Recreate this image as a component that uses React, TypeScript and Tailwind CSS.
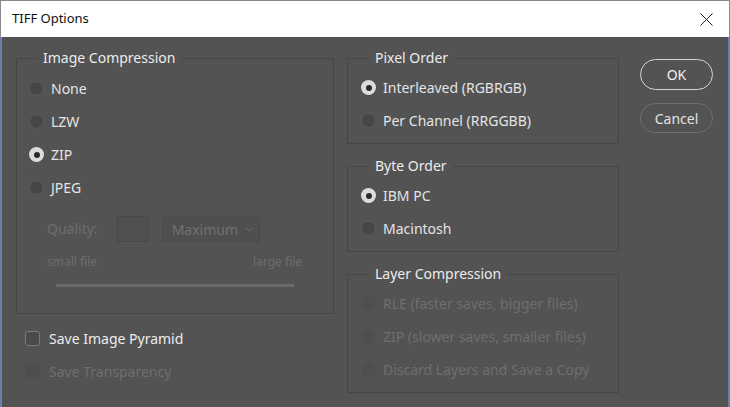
import { ReactNode } from "react";

type RadioProps = { label: string; checked?: boolean; disabled?: boolean };

const Radio = ({ label, checked, disabled }: RadioProps) => (
  <div className="flex h-[33px] items-center">
    {checked ? (
      <span className="flex h-[15px] w-[15px] items-center justify-center rounded-full bg-[#dcdcdc]">
        <span className="h-[6px] w-[6px] rounded-full bg-[#2a2a2a]" />
      </span>
    ) : (
      <span
        className={
          disabled
            ? "h-[15px] w-[15px] rounded-full bg-[#4f4f4f]"
            : "h-[15px] w-[15px] rounded-full border border-[#5c5c5c] bg-[#464646]"
        }
      />
    )}
    <span
      className={`ml-[7px] text-[14px] ${
        disabled ? "text-[#6e6e6e]" : "text-[#e4e4e4]"
      }`}
    >
      {label}
    </span>
  </div>
);

const Group = ({
  title,
  className,
  children,
}: {
  title: string;
  className: string;
  children: ReactNode;
}) => (
  <fieldset className={`border border-[#464646] ${className}`}>
    <legend className="ml-[8px] px-[6px] text-[14px] leading-[20px] text-[#ececec]">
      {title}
    </legend>
    {children}
  </fieldset>
);

const Checkbox = ({ label, disabled }: { label: string; disabled?: boolean }) => (
  <div className="flex h-[33px] items-center">
    <span
      className={
        disabled
          ? "h-[15px] w-[15px] rounded-[3px] bg-[#4e4e4e]"
          : "h-[15px] w-[15px] rounded-[3px] border border-[#7a7a7a] bg-[#4a4a4a]"
      }
    />
    <span
      className={`ml-[9px] text-[14px] ${
        disabled ? "text-[#6e6e6e]" : "text-[#ececec]"
      }`}
    >
      {label}
    </span>
  </div>
);

export default function App() {
  return (
    <div
      className="flex h-[407px] w-[730px] flex-col overflow-hidden"
      style={{ fontFamily: '"Noto Sans", "Open Sans", sans-serif' }}
    >
      {/* Title bar */}
      <div className="flex h-[37px] shrink-0 items-center justify-between border-x border-t border-[#8a8a8a] bg-white pl-[11px] pr-[16px]">
        <span className="text-[13px] text-[#111]">TIFF Options</span>
        <svg width="13" height="13" viewBox="0 0 13 13">
          <path d="M0.5 0.5 L12.5 12.5 M12.5 0.5 L0.5 12.5" stroke="#222" strokeWidth="1" />
        </svg>
      </div>

      {/* Body */}
      <div className="flex flex-1 border-l-2 border-r-2 border-[#6682ab] bg-[#535353] pl-[14px] pt-[11px]">
        {/* Left column */}
        <div className="flex w-[318px] flex-col">
          <Group title="Image Compression" className="h-[266px] px-[12px] pt-[4px]">
            <Radio label="None" />
            <Radio label="LZW" />
            <Radio label="ZIP" checked />
            <Radio label="JPEG" />
            <div className="ml-[18px] mt-[11px] flex items-center">
              <span className="text-[14px] text-[#6e6e6e]">Quality:</span>
              <span className="ml-[19px] h-[26px] w-[32px] border border-[#484848] bg-[#505050]" />
              <span className="ml-[13px] mt-[2px] flex h-[25px] w-[98px] items-center justify-between border border-[#4b4b4b] bg-[#4f4f4f] pl-[9px] pr-[6px]">
                <span className="text-[14px] text-[#717171]">Maximum</span>
                <svg width="8" height="5" viewBox="0 0 8 5">
                  <path d="M0.5 0.5 L4 4 L7.5 0.5" stroke="#6e6e6e" fill="none" strokeWidth="1" />
                </svg>
              </span>
            </div>
            <div className="ml-[18px] mr-[19px] mt-[11px] flex justify-between text-[12px] text-[#6e6e6e]">
              <span>small file</span>
              <span>large file</span>
            </div>
            <div className="ml-[27px] mr-[27px] mt-[13px] h-[3px] bg-[#6b6b6b]" />
          </Group>
          <div className="ml-[9px] mt-[8px] flex flex-col">
            <Checkbox label="Save Image Pyramid" />
            <Checkbox label="Save Transparency" disabled />
          </div>
        </div>

        {/* Middle column */}
        <div className="ml-[13px] flex w-[272px] flex-col">
          <Group title="Pixel Order" className="h-[96px] px-[13px] pt-[3px]">
            <Radio label="Interleaved (RGBRGB)" checked />
            <Radio label="Per Channel (RRGGBB)" />
          </Group>
          <Group title="Byte Order" className="mt-[12px] h-[96px] px-[13px] pt-[3px]">
            <Radio label="IBM PC" checked />
            <Radio label="Macintosh" />
          </Group>
          <Group title="Layer Compression" className="mt-[12px] h-[129px] px-[13px] pt-[3px]">
            <Radio label="RLE (faster saves, bigger files)" disabled />
            <Radio label="ZIP (slower saves, smaller files)" disabled />
            <Radio label="Discard Layers and Save a Copy" disabled />
          </Group>
        </div>

        {/* Buttons */}
        <div className="ml-[21px] mt-[11px] flex w-[73px] flex-col gap-[13px]">
          <button className="h-[31px] rounded-full border-[1.5px] border-[#d4d4d4] text-[14px] text-[#f0f0f0]">
            OK
          </button>
          <button className="h-[30px] rounded-full border border-[#6f6f6f] text-[14px] text-[#e2e2e2]">
            Cancel
          </button>
        </div>
      </div>
    </div>
  );
}
